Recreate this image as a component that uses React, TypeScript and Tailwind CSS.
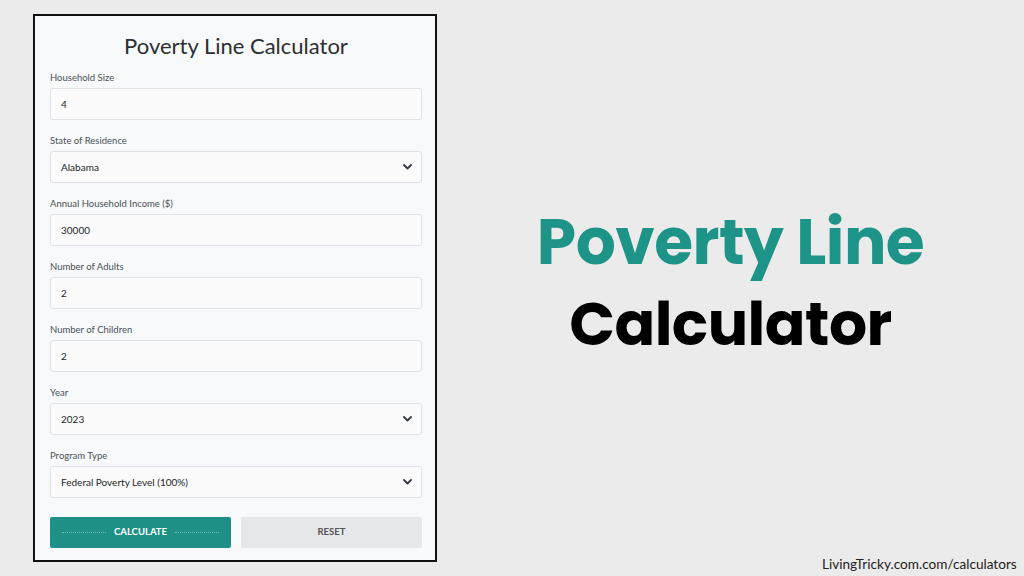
import React from 'react'

const fields = [
  { label: 'Household Size', value: '4', select: false },
  { label: 'State of Residence', value: 'Alabama', select: true },
  { label: 'Annual Household Income ($)', value: '30000', select: false },
  { label: 'Number of Adults', value: '2', select: false },
  { label: 'Number of Children', value: '2', select: false },
  { label: 'Year', value: '2023', select: true },
  { label: 'Program Type', value: 'Federal Poverty Level (100%)', select: true },
]

function Chevron() {
  return (
    <svg width="9" height="6" viewBox="0 0 9 6" className="text-[#343a40]">
      <path d="M1 1l3.5 3.5L8 1" fill="none" stroke="currentColor" strokeWidth="1.8" strokeLinecap="round" strokeLinejoin="round" />
    </svg>
  )
}

function Field({ label, value, select }: { label: string; value: string; select: boolean }) {
  return (
    <div className="mb-[15px] flex flex-col">
      <label className="mb-[4px] h-[12px] text-[9.5px] leading-[12px] text-[#495057]">{label}</label>
      <div className="flex h-[32px] items-center justify-between rounded-[3px] border border-[#dee2e6] bg-[#fbfbfc] pl-[10px] pr-[9px] text-[10px] text-[#212529]">
        <span>{value}</span>
        {select && <Chevron />}
      </div>
    </div>
  )
}

export default function App() {
  return (
    <div className="flex h-[576px] w-[1024px] bg-[#ebebeb] font-['Lato',sans-serif]">
      <div className="ml-[33px] mt-[14px] flex h-[548px] w-[404px] flex-col border-2 border-[#111] bg-[#f8f9fa] px-[15px] pr-[13px]">
        <h1 className="mt-[16px] mb-[12px] text-center text-[22px] leading-[28px] text-[#2b2f33]">Poverty Line Calculator</h1>
        {fields.map(f => (
          <Field key={f.label} {...f} />
        ))}
        <div className="mt-[4px] flex gap-[10px]">
          <button className="flex h-[31px] w-[181px] items-center rounded-[2px] bg-[#1e9085] px-[10px] text-[9.5px] font-bold text-white">
            <span className="mx-[2px] flex-1 border-t border-dotted border-white/40" />
            <span className="px-[6px]">CALCULATE</span>
            <span className="mx-[2px] flex-1 border-t border-dotted border-white/40" />
          </button>
          <button className="flex h-[31px] w-[181px] items-center justify-center rounded-[2px] bg-[#e6e7e8] text-[9.5px] font-bold text-[#555]">
            RESET
          </button>
        </div>
      </div>
      <div className="flex flex-1 flex-col items-center pt-[200px] font-['Poppins','Inter',sans-serif] font-bold">
        <div className="text-[63px] leading-[84px] tracking-[-0.5px] text-[#1e9488]">Poverty Line</div>
        <div className="mt-[0px] text-[60px] leading-[80px] tracking-[-0.5px] text-black">Calculator</div>
      </div>
      <div className="absolute left-[822px] top-[554px] text-[13.6px] text-[#222]">LivingTricky.com.com/calculators</div>
    </div>
  )
}
